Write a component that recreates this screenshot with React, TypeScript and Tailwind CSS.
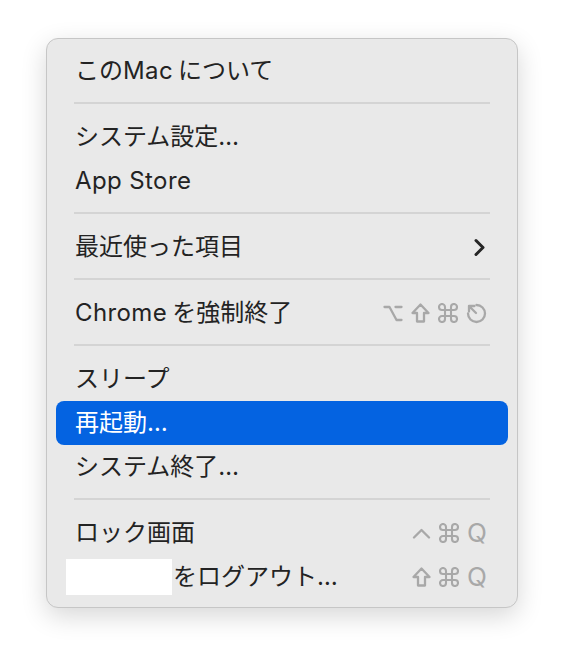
import React from 'react'

const FONT = { fontFamily: '"Inter", "Noto Sans CJK JP", sans-serif' }

function OptionKey() {
  return (
    <svg width="20" height="17" viewBox="0 0 20 17" fill="none" stroke="currentColor" strokeWidth="2.3" strokeLinecap="round" strokeLinejoin="round">
      <path d="M1.5 2h5l7 13h5M12.5 2h6" />
    </svg>
  )
}

function ShiftKey() {
  return (
    <svg width="19" height="20" viewBox="0 0 19 20" fill="none" stroke="currentColor" strokeWidth="2.3" strokeLinejoin="round">
      <path d="M9.5 1.5l8 8.5h-4.5v8.5h-7v-8.5h-4.5z" />
    </svg>
  )
}

function EscKey() {
  return (
    <svg width="21" height="21" viewBox="0 0 21 21" fill="none" stroke="currentColor" strokeWidth="2.3" strokeLinecap="round" strokeLinejoin="round">
      <path d="M10.5 2a8.5 8.5 0 1 1-8.5 8.5" />
      <path d="M3 3l7 7M3 8.5V3h5.5" />
    </svg>
  )
}

function ControlKey() {
  return (
    <svg width="19" height="11" viewBox="0 0 19 11" fill="none" stroke="currentColor" strokeWidth="2.3" strokeLinecap="round" strokeLinejoin="round">
      <path d="M2 9.5l7.5-7.5 7.5 7.5" />
    </svg>
  )
}

function Cmd() {
  return (
    <svg width="20" height="20" viewBox="2 2 20 20" fill="none" stroke="currentColor" strokeWidth="2.1" strokeLinecap="round" strokeLinejoin="round">
      <path d="M15 6v12a3 3 0 1 0 3-3H6a3 3 0 1 0 3 3V6a3 3 0 1 0-3 3h12a3 3 0 1 0-3-3" />
    </svg>
  )
}

function Q() {
  return <span className="text-[26px] leading-none">Q</span>
}

function Separator() {
  return (
    <div className="h-[22px] px-[27px] pt-[9px]">
      <div className="h-[2px] bg-[#d4d4d4]" />
    </div>
  )
}

function Item({
  label, active, right,
}: { label: React.ReactNode; active?: boolean; right?: React.ReactNode }) {
  return (
    <div
      className={
        active
          ? 'mx-[9px] h-[44px] flex items-center justify-between pl-[19px] pr-[21px] rounded-[8px] bg-[#0463e1] text-white'
          : 'mx-[9px] h-[44px] flex items-center justify-between pl-[19px] pr-[21px] rounded-[8px] text-[#232323]'
      }
    >
      <span className="text-[24px] leading-none whitespace-nowrap flex items-center">{label}</span>
      {right && <span className="flex items-center gap-[8px] text-[#a8a8a8]">{right}</span>}
    </div>
  )
}

function Latin({ children }: { children: React.ReactNode }) {
  return <span className="tracking-[0.4px]">{children}</span>
}

export default function App() {
  return (
    <div className="w-[564px] h-[662px] bg-white pt-[38px] pl-[46px]" style={FONT}>
      <div className="w-[472px] rounded-[12px] border border-[#c6c6c6] bg-[#e9e9e9] pt-[10px] pb-[8px] shadow-[0_8px_26px_rgba(0,0,0,0.16)]">
        <Item label={<>この<Latin>Mac</Latin><span className="ml-[5px]">について</span></>} />
        <Separator />
        <Item label="システム設定…" />
        <Item label={<Latin>App Store</Latin>} />
        <Separator />
        <Item
          label="最近使った項目"
          right={
            <svg width="14" height="19" viewBox="0 0 14 19" fill="none" stroke="#262626" strokeWidth="3" strokeLinecap="round" strokeLinejoin="round">
              <path d="M3 2.5l7 7-7 7" />
            </svg>
          }
        />
        <Separator />
        <Item
          label={<><Latin>Chrome</Latin><span className="ml-[5px]">を強制終了</span></>}
          right={<><OptionKey /><ShiftKey /><Cmd /><EscKey /></>}
        />
        <Separator />
        <Item label="スリープ" />
        <Item label="再起動…" active />
        <Item label="システム終了…" />
        <Separator />
        <Item label="ロック画面" right={<><ControlKey /><Cmd /><Q /></>} />
        <Item
          label={<><span className="inline-block w-[106px] h-[36px] bg-white -ml-[9px] mr-[1px]" />をログアウト…</>}
          right={<><ShiftKey /><Cmd /><Q /></>}
        />
      </div>
    </div>
  )
}
